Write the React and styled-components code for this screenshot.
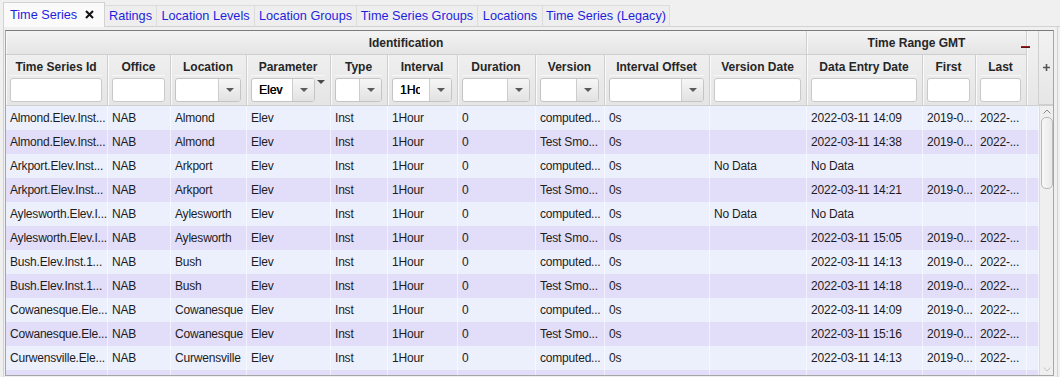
import React from "react";
import styled, { createGlobalStyle } from "styled-components";

const GlobalStyle = createGlobalStyle`
  html, body {
    margin: 0;
    padding: 0;
    width: 1060px;
    height: 377px;
    overflow: hidden;
    background: #f0f0f0;
    font-family: "Liberation Sans", Arial, sans-serif;
  }
  * { box-sizing: border-box; }
`;

const COLS = "102px 63px 76px 84px 57px 70px 78px 69px 105px 97px 116px 53px 51px 12px";

const Page = styled.div`
  display: flex;
  flex-direction: column;
  height: 377px;
`;

const TabBar = styled.div`
  display: flex;
  align-items: flex-end;
  height: 27px;
  padding-left: 3px;
`;

const Tab = styled.div`
  width: ${p => p.$w}px;
  height: ${p => (p.$active ? 25 : 22)}px;
  display: flex;
  align-items: center;
  justify-content: ${p => (p.$active ? "space-between" : "center")};
  padding: ${p => (p.$active ? "0 10px 1px 6px" : "0")};
  font-size: 12.7px;
  color: #1e1ee0;
  background: ${p => (p.$active ? "#fafafa" : "#eeeeee")};
  border: 1px solid ${p => (p.$active ? "#d2d2d2" : "#dcdcdc")};
  border-left: ${p => (p.$active ? "1px solid #d2d2d2" : "none")};
  border-bottom: ${p => (p.$active ? "none" : "1px solid #d2d2d2")};
  white-space: nowrap;
`;

const TabFill = styled.div`
  flex: 1;
  align-self: flex-end;
  border-bottom: 1px solid #d2d2d2;
`;

const Panel = styled.div`
  flex: 1;
  margin: 0 2px 0 3px;
  padding: 3px 3px 0 1px;
  border-left: 1px solid #d2d2d2;
  border-right: 1px solid #d2d2d2;
  display: flex;
  flex-direction: column;
`;

const TableBox = styled.div`
  border: 1px solid #a6a6a6;
  border-top-color: #7c7c7c;
  display: flex;
  flex-direction: column;
  height: 346px;
`;

const HeaderArea = styled.div`
  display: flex;
`;

const HeaderGrid = styled.div`
  position: relative;
  display: grid;
  grid-template-columns: ${COLS};
  grid-template-rows: 24px 50px;
  background: linear-gradient(#f3f3f3, #e6e6e6);
`;

const GroupCell = styled.div`
  grid-column: ${p => p.$span};
  grid-row: 1;
  display: flex;
  align-items: center;
  justify-content: center;
  padding-top: 1px;
  font-size: 12px;
  font-weight: bold;
  color: #262626;
  border-bottom: 1px solid #cfcfcf;
  border-right: 1px solid #cfcfcf;
  box-shadow: inset 1px 0 #fafafa;
  background: linear-gradient(#f4f4f4, #e4e4e4);
`;

const BlankHead = styled.div`
  grid-column: 14;
  grid-row: 1 / 3;
  border-right: 1px solid #cfcfcf;
  box-shadow: inset 1px 0 #fafafa;
  background: linear-gradient(#f2f2f2, #e6e6e6);
`;

const ColHead = styled.div`
  grid-row: 2;
  display: flex;
  flex-direction: column;
  padding: 4px 5px 2px 4px;
  border-right: 1px solid #cfcfcf;
  box-shadow: inset 1px 0 #fafafa;
  background: linear-gradient(#efefef, #e5e5e5);
`;

const ColTitle = styled.div`
  height: 17px;
  line-height: 16px;
  text-align: center;
  font-size: 12px;
  font-weight: bold;
  color: #262626;
  white-space: nowrap;
  border-bottom: 1px solid #f6f6f6;
`;

const FilterRow = styled.div`
  display: flex;
  align-items: flex-start;
  margin-top: 2px;
  height: 24px;
`;

const TextBox = styled.div`
  flex: 1;
  height: 24px;
  background: #fff;
  border: 1px solid #c9c9c9;
  border-radius: 3px;
`;

const Combo = styled.div`
  flex: 1;
  display: flex;
  height: 24px;
  background: #fff;
  border: 1px solid #c4c4c4;
  border-radius: 3px;
  overflow: hidden;
`;

const ComboWindow = styled.div`
  flex: 1;
  min-width: 0;
  padding: 0 ${p => p.$pr}px 0 7px;
`;

const ComboText = styled.div`
  overflow: hidden;
  line-height: 22px;
  font-size: 12px;
  color: #000;
  white-space: nowrap;
  text-shadow: 0.3px 0 0 #000;
`;

const ComboButton = styled.div`
  width: 22px;
  flex: none;
  display: flex;
  align-items: center;
  justify-content: center;
  border-left: 1px solid #cdcdcd;
  background: linear-gradient(#f6f6f6, #e2e2e2);
`;

const SortMark = styled.div`
  width: 10px;
  flex: none;
  display: flex;
  justify-content: flex-end;
  padding-top: 2px;
`;

const Corner = styled.div`
  width: 14px;
  display: flex;
  align-items: center;
  justify-content: center;
  background: linear-gradient(#f2f2f2, #e6e6e6);
  border-bottom: 1px solid #cfcfcf;
`;

const RedDash = styled.div`
  position: absolute;
  left: 1015px;
  top: 15px;
  width: 9px;
  height: 2px;
  background: #5a1414;
  border-top: 1px solid #a31a1a;
`;

const BodyArea = styled.div`
  flex: 1;
  display: flex;
  min-height: 0;
  border-top: 1px solid #cfcfcf;
`;

const Rows = styled.div`
  width: 1033px;
  overflow: hidden;
`;

const Row = styled.div`
  display: grid;
  grid-template-columns: ${COLS};
  height: 24px;
  background: ${p => (p.$alt ? "#e2ddf8" : "#ecf0fc")};
`;

const Cell = styled.div`
  padding-left: 4px;
  line-height: 24px;
  font-size: 12px;
  letter-spacing: -0.2px;
  color: #1c1c1c;
  white-space: nowrap;
  overflow: hidden;
  border-right: 1px solid rgba(255, 255, 255, 0.55);
`;

const ScrollBar = styled.div`
  width: 14px;
  display: flex;
  flex-direction: column;
  align-items: center;
  background: #efefef;
  border-left: 1px solid #dcdcdc;
`;

const ScrollArrow = styled.div`
  height: 11px;
  display: flex;
  align-items: center;
  justify-content: center;
`;

const Thumb = styled.div`
  width: 12px;
  height: 72px;
  border: 1px solid #bababa;
  border-radius: 5px;
  background: linear-gradient(90deg, #f8f8f8, #e9e9e9);
`;

const Spacer = styled.div`
  flex: 1;
`;

const Tri = ({ color = "#555" }) => (
  <svg width="8" height="4" viewBox="0 0 8 4">
    <path d="M0 0 H8 L4 4 Z" fill={color} />
  </svg>
);

const Chevron = ({ up, color }) => (
  <svg width="8" height="5" viewBox="0 0 8 5">
    <polyline
      points={up ? "0.5,4.5 4,1 7.5,4.5" : "0.5,0.5 4,4 7.5,0.5"}
      fill="none"
      stroke={color}
      strokeWidth="1"
    />
  </svg>
);

const CloseIcon = () => (
  <svg width="9" height="9" viewBox="0 0 9 9">
    <path d="M1 1 L8 8 M8 1 L1 8" stroke="#111" strokeWidth="2" />
  </svg>
);

const PlusIcon = () => (
  <svg width="7" height="7" viewBox="0 0 7 7">
    <path d="M3.5 0 V7 M0 3.5 H7" stroke="#555" strokeWidth="1.6" />
  </svg>
);

const tabs = [
  ["Time Series", 102],
  ["Ratings", 52],
  ["Location Levels", 98],
  ["Location Groups", 102],
  ["Time Series Groups", 121],
  ["Locations", 65],
  ["Time Series (Legacy)", 127],
];

// clip: right inset of the combo's text window (Interval shows "1Hour" cut short)
const columns = [
  { title: "Time Series Id", filter: "text" },
  { title: "Office", filter: "text" },
  { title: "Location", filter: "combo" },
  { title: "Parameter", filter: "combo", value: "Elev", sort: true },
  { title: "Type", filter: "combo" },
  { title: "Interval", filter: "combo", value: "1Hour", clip: 9 },
  { title: "Duration", filter: "combo" },
  { title: "Version", filter: "combo" },
  { title: "Interval Offset", filter: "combo" },
  { title: "Version Date", filter: "text" },
  { title: "Data Entry Date", filter: "text" },
  { title: "First", filter: "text" },
  { title: "Last", filter: "text" },
];

const C = "computed...";
const T = "Test Smo...";
const F = "2019-0...";
const L = "2022-...";

const rows = [
  ["Almond.Elev.Inst...", "Almond", C, "", "2022-03-11 14:09", F, L],
  ["Almond.Elev.Inst...", "Almond", T, "", "2022-03-11 14:38", F, L],
  ["Arkport.Elev.Inst...", "Arkport", C, "No Data", "No Data", "", ""],
  ["Arkport.Elev.Inst...", "Arkport", T, "", "2022-03-11 14:21", F, L],
  ["Aylesworth.Elev.I...", "Aylesworth", C, "No Data", "No Data", "", ""],
  ["Aylesworth.Elev.I...", "Aylesworth", T, "", "2022-03-11 15:05", F, L],
  ["Bush.Elev.Inst.1...", "Bush", C, "", "2022-03-11 14:13", F, L],
  ["Bush.Elev.Inst.1...", "Bush", T, "", "2022-03-11 14:18", F, L],
  ["Cowanesque.Ele...", "Cowanesque", C, "", "2022-03-11 14:09", F, L],
  ["Cowanesque.Ele...", "Cowanesque", T, "", "2022-03-11 15:16", F, L],
  ["Curwensville.Ele...", "Curwensville", C, "", "2022-03-11 14:13", F, L],
].map(([id, loc, ver, vdate, entry, first, last]) => [
  id, "NAB", loc, "Elev", "Inst", "1Hour", "0", ver, "0s", vdate, entry, first, last, "",
]);

const Filter = ({ col }) => (
  <FilterRow>
    {col.filter === "text" ? (
      <TextBox />
    ) : (
      <Combo>
        <ComboWindow $pr={col.clip || 4}>
          <ComboText>{col.value}</ComboText>
        </ComboWindow>
        <ComboButton>
          <Tri color="#5a5a5a" />
        </ComboButton>
      </Combo>
    )}
    {col.sort && (
      <SortMark>
        <Tri color="#4a4a4a" />
      </SortMark>
    )}
  </FilterRow>
);

export default function App() {
  return (
    <Page>
      <GlobalStyle />
      <TabBar>
        {tabs.map(([label, w], i) => (
          <Tab key={label} $w={w} $active={i === 0}>
            {label}
            {i === 0 && <CloseIcon />}
          </Tab>
        ))}
        <TabFill />
      </TabBar>
      <Panel>
        <TableBox>
          <HeaderArea>
            <HeaderGrid>
              <GroupCell $span="1 / 11">Identification</GroupCell>
              <GroupCell $span="11 / 14">Time Range GMT</GroupCell>
              <BlankHead />
              {columns.map(col => (
                <ColHead key={col.title}>
                  <ColTitle>{col.title}</ColTitle>
                  <Filter col={col} />
                </ColHead>
              ))}
              <RedDash />
            </HeaderGrid>
            <Corner>
              <PlusIcon />
            </Corner>
          </HeaderArea>
          <BodyArea>
            <Rows>
              {rows.map((r, i) => (
                <Row key={i} $alt={i % 2 === 1}>
                  {r.map((v, j) => (
                    <Cell key={j}>{v}</Cell>
                  ))}
                </Row>
              ))}
              <Row $alt>
                {columns.map(c => (
                  <Cell key={c.title} />
                ))}
                <Cell />
              </Row>
            </Rows>
            <ScrollBar>
              <ScrollArrow>
                <Chevron up color="#8a8a8a" />
              </ScrollArrow>
              <Thumb />
              <Spacer />
              <ScrollArrow>
                <Chevron color="#c4c4c4" />
              </ScrollArrow>
            </ScrollBar>
          </BodyArea>
        </TableBox>
      </Panel>
    </Page>
  );
}
